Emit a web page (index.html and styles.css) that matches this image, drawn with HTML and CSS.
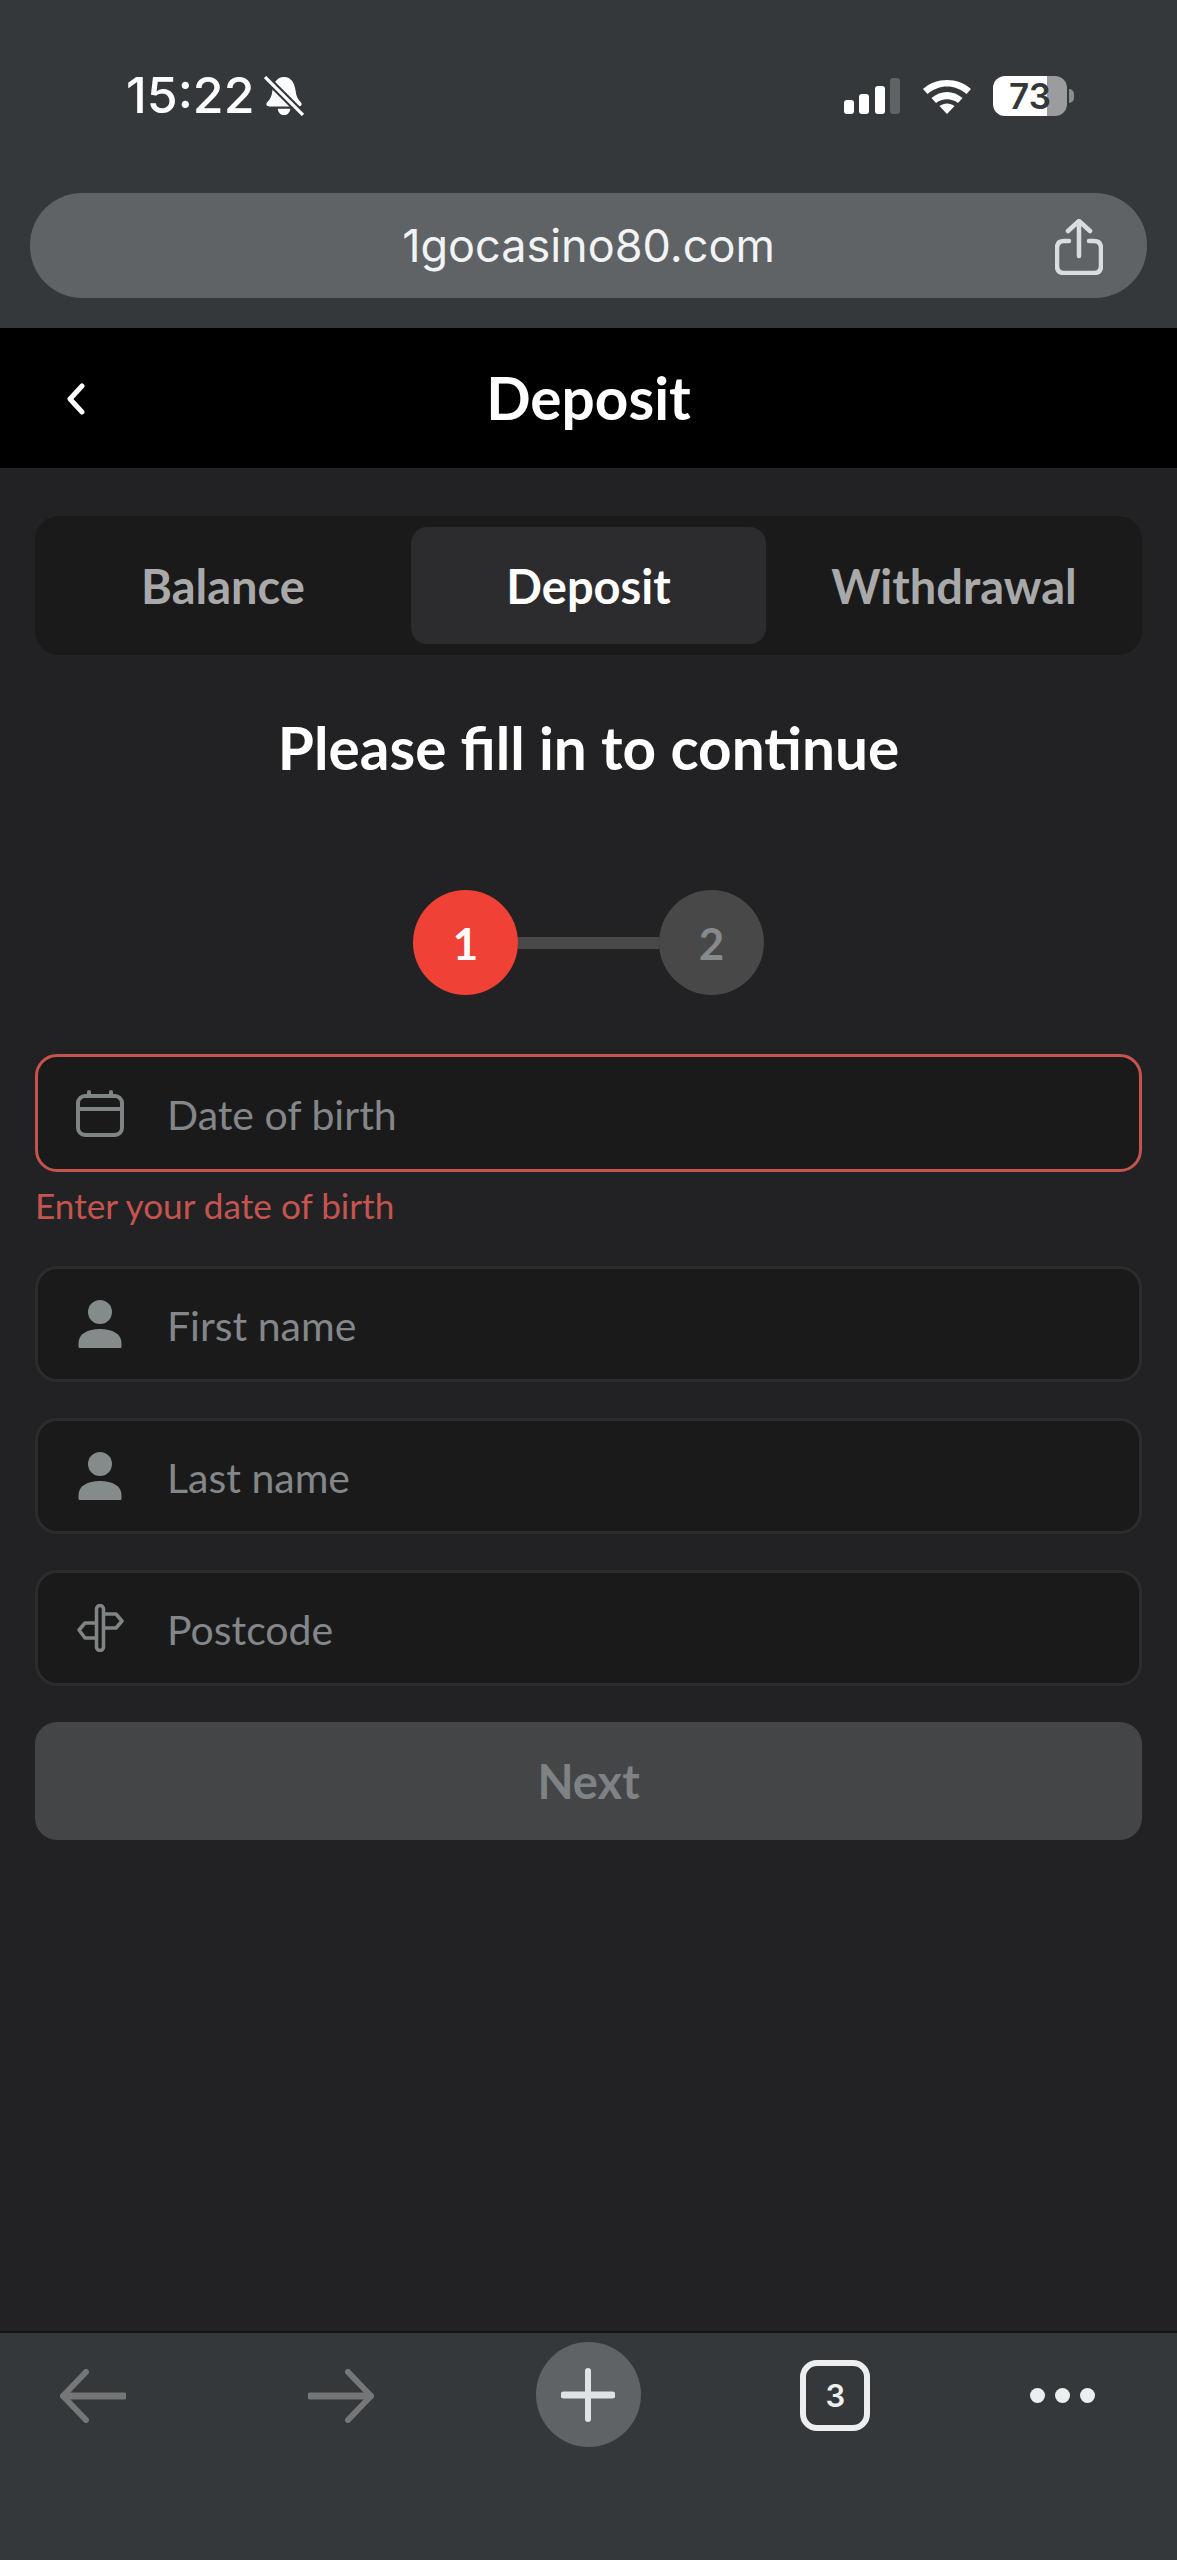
FILE: index.html
```html
<!DOCTYPE html>
<html lang="en">
<head>
    <meta charset="UTF-8">
    <meta name="viewport" content="width=device-width, initial-scale=1.0">
    <title>Deposit</title>
    <link rel="stylesheet" href="styles.css">
</head>
<body>
    <!-- Browser chrome -->
    <div class="browser-top">
        <div class="status-bar">
            <div class="status-left">
                <span class="time">15:22</span>
                <svg class="bell" viewBox="0 0 38 38">
                    <path d="M19 1c7 0 10 6 11 13 .5 5 2 8 5 11 1.500 2 .5 4-2 4H5c-2.500 0-3.500-2-2-4 3-3 4.500-6 5-11C9 7 12 1 19 1z" fill="#fff"/>
                    <path d="M13 31h12c-.5 4-3 6-6 6s-5.500-2-6-6z" fill="#fff"/>
                    <path d="M3 3l33 33" stroke="#35383a" stroke-width="7"/>
                    <path d="M1 1l36 36" stroke="#fff" stroke-width="3"/>
                </svg>
            </div>
            <div class="status-right">
                <div class="signal">
                    <span class="bar bar-1"></span>
                    <span class="bar bar-2"></span>
                    <span class="bar bar-3"></span>
                    <span class="bar bar-4"></span>
                </div>
                <svg class="wifi" viewBox="0 0 50 36">
                    <path d="M1 11C14-1 36-1 49 11l-4.500 5C33 6 17 6 5.500 16z" fill="#fff"/>
                    <path d="M9.500 20c9-8 22-8 31 0l-4.500 5c-6.500-5-15.500-5-22 0z" fill="#fff"/>
                    <path d="M17.500 28c4.500-3.500 10.500-3.500 15 0L25 36z" fill="#fff"/>
                </svg>
                <div class="battery">
                    <div class="battery-body"><span class="battery-text">73</span></div>
                    <span class="battery-nub"></span>
                </div>
            </div>
        </div>
        <div class="url-bar">
            <span class="url-text">1gocasino80.com</span>
            <svg class="share" viewBox="0 0 48 56" fill="none" stroke="#d9dde0" stroke-width="4.500" stroke-linecap="round" stroke-linejoin="round">
                <path d="M14 22H9c-4 0-7 2-7 7v18c0 5 3 7 7 7h30c4 0 7-2 7-7V29c0-5-3-7-7-7h-5"/>
                <path d="M24 37V3M13 12L24 2l11 10"/>
            </svg>
        </div>
    </div>

    <header class="page-header">
        <svg class="back" viewBox="0 0 20 32" fill="none" stroke="#fff" stroke-width="5" stroke-linecap="round" stroke-linejoin="round">
            <path d="M16 3L4 16l12 13"/>
        </svg>
        <h1>Deposit</h1>
    </header>

    <main>
        <div class="tabs">
            <div class="tab">Balance</div>
            <div class="tab active">Deposit</div>
            <div class="tab">Withdrawal</div>
        </div>

        <h2>Please fill in to continue</h2>

        <div class="stepper">
            <div class="step current">1</div>
            <div class="step-line"></div>
            <div class="step">2</div>
        </div>

        <form class="fields">
            <div class="field-group">
                <div class="field invalid">
                    <svg class="field-icon" viewBox="0 0 48 48" fill="none" stroke="#7f8485" stroke-width="4" stroke-linecap="round" stroke-linejoin="round">
                        <rect x="2" y="7" width="44" height="39" rx="7"/>
                        <path d="M2 20h44M13 3v4M35 3v4"/>
                    </svg>
                    <span class="placeholder">Date of birth</span>
                </div>
                <div class="error">Enter your date of birth</div>
            </div>
            <div class="field">
                <svg class="field-icon" viewBox="0 0 48 48" fill="#858a8b">
                    <circle cx="24" cy="12" r="12"/>
                    <path d="M4 48c-1 0-1.500-.5-1.500-1.500V43c0-9 9-14 21.500-14s21.500 5 21.500 14v3.500c0 1-.5 1.500-1.500 1.500z"/>
                </svg>
                <span class="placeholder">First name</span>
            </div>
            <div class="field">
                <svg class="field-icon" viewBox="0 0 48 48" fill="#858a8b">
                    <circle cx="24" cy="12" r="12"/>
                    <path d="M4 48c-1 0-1.500-.5-1.500-1.500V43c0-9 9-14 21.500-14s21.500 5 21.500 14v3.500c0 1-.5 1.500-1.500 1.500z"/>
                </svg>
                <span class="placeholder">Last name</span>
            </div>
            <div class="field">
                <svg class="field-icon" viewBox="0 0 48 48" fill="none" stroke="#7f8485" stroke-width="3.500" stroke-linejoin="round">
                    <rect x="20.500" y="1.500" width="7" height="45" rx="3.500"/>
                    <path d="M27.500 10H40l6 7-6 7H27.500"/>
                    <path d="M20.500 19H9l-6 7 6 8h11.500"/>
                </svg>
                <span class="placeholder">Postcode</span>
            </div>
            <button class="next" type="button">Next</button>
        </form>
    </main>

    <!-- Browser toolbar -->
    <nav class="toolbar">
        <svg class="arrow arrow-back" viewBox="0 0 66 54" fill="none" stroke="#757677" stroke-linecap="round" stroke-linejoin="round">
            <path d="M64 27H4" stroke-width="7"/>
            <path d="M26 3L3 27l23 24" stroke-width="6"/>
        </svg>
        <svg class="arrow" viewBox="0 0 66 54" fill="none" stroke="#757677" stroke-linecap="round" stroke-linejoin="round">
            <path d="M2 27h60" stroke-width="7"/>
            <path d="M40 3l23 24-23 24" stroke-width="6"/>
        </svg>
        <div class="plus">
            <svg class="plus-icon" viewBox="0 0 54 54" fill="none" stroke="#dfe2e6" stroke-linecap="round">
                <path d="M27 3v48" stroke-width="6"/>
                <path d="M3 27h48" stroke-width="7"/>
            </svg>
        </div>
        <div class="tab-count">3</div>
        <div class="dots">
            <span class="dot"></span>
            <span class="dot"></span>
            <span class="dot"></span>
        </div>
    </nav>
</body>
</html>
```

FILE: styles.css
```css
/* Reset and basic styles */
* {
    margin: 0;
    padding: 0;
    box-sizing: border-box;
}

body {
    width: 1177px;
    height: 2560px;
    display: flex;
    flex-direction: column;
    font-family: Lato, "Noto Sans", sans-serif;
    background-color: #222224;
    color: #fff;
    overflow: hidden;
}

/* Browser top */
.browser-top {
    height: 328px;
    background-color: #35383a;
    padding: 75px 30px 0;
}

.status-bar {
    height: 41px;
    display: flex;
    justify-content: space-between;
    align-items: center;
    padding: 0 73px 0 96px;
}

.status-left {
    display: flex;
    align-items: center;
    gap: 10px;
}

.time {
    font-family: Inter, sans-serif;
    font-size: 50px;
    font-weight: 500;
    line-height: 41px;
}

.bell {
    width: 40px;
    height: 40px;
}

.status-right {
    display: flex;
    align-items: center;
}

.signal {
    display: flex;
    align-items: flex-end;
    gap: 5.500px;
    height: 36px;
    margin-right: 22px;
}

.bar {
    width: 10px;
    background-color: #fff;
    border-radius: 3px;
}

.bar-1 { height: 14px; }
.bar-2 { height: 20px; }
.bar-3 { height: 28px; }
.bar-4 { height: 36px; background-color: #5f6366; }

.wifi {
    width: 50px;
    height: 36px;
    margin-right: 21px;
}

.battery {
    display: flex;
    align-items: center;
    gap: 2px;
}

.battery-body {
    width: 74px;
    height: 40px;
    border-radius: 12px;
    background: linear-gradient(to right, #fff 73%, #9c9c9e 73%);
    text-align: center;
}

.battery-text {
    font-family: Inter, sans-serif;
    font-size: 35px;
    font-weight: 600;
    line-height: 40px;
    color: #35383a;
}

.battery-nub {
    width: 5px;
    height: 14px;
    background-color: #8c8d8f;
    border-radius: 0 5px 5px 0;
}

.url-bar {
    margin-top: 77px;
    height: 105px;
    background-color: #5f6366;
    border-radius: 52px;
    display: flex;
    align-items: center;
    justify-content: center;
    position: relative;
}

.url-text {
    font-family: Inter, sans-serif;
    font-size: 45px;
    color: #f2f3f4;
}

.share {
    position: absolute;
    right: 44px;
    top: 26px;
    width: 48px;
    height: 56px;
}

/* Page header */
.page-header {
    height: 140px;
    background-color: #000;
    display: flex;
    align-items: center;
    justify-content: center;
    position: relative;
}

.page-header h1 {
    font-size: 58.500px;
    line-height: 64px;
    padding-bottom: 3px;
    font-weight: 700;
}

.back {
    position: absolute;
    left: 66px;
    top: 55px;
    width: 20px;
    height: 32px;
}

/* Main content */
main {
    flex: 1;
    padding: 48px 35px 0;
}

.tabs {
    display: grid;
    grid-template-columns: 376px 355px 376px;
    height: 139px;
    padding: 11px 0;
    background-color: #1a1a1b;
    border-radius: 24px;
}

.tab {
    display: flex;
    align-items: center;
    justify-content: center;
    font-size: 47px;
    font-weight: 700;
    color: #a9a9aa;
    border-radius: 16px;
}

.tab.active {
    background-color: #2c2c2e;
    color: #fff;
}

main h2 {
    margin-top: 58px;
    font-size: 58.500px;
    line-height: 68px;
    font-weight: 700;
    text-align: center;
}

.stepper {
    margin-top: 109px;
    display: flex;
    align-items: center;
    justify-content: center;
}

.step {
    width: 105px;
    height: 105px;
    border-radius: 50%;
    background-color: #484849;
    color: #858a8b;
    display: flex;
    align-items: center;
    justify-content: center;
    font-size: 44px;
    font-weight: 700;
}

.step.current {
    background-color: #ef4136;
    color: #fff;
}

.step-line {
    width: 141px;
    height: 12px;
    background-color: #484849;
}

.fields {
    margin-top: 59px;
    display: flex;
    flex-direction: column;
    gap: 36px;
}

.field {
    height: 116px;
    display: flex;
    align-items: center;
    gap: 43px;
    padding-left: 38px;
    background-color: #1a1a1b;
    border: 3px solid #2b2c2e;
    border-radius: 22px;
}

.field.invalid {
    height: 118px;
    border-color: #c5544f;
}

.field-icon {
    width: 48px;
    height: 48px;
    flex-shrink: 0;
}

.placeholder {
    font-size: 41px;
    padding-top: 2px;
    color: #83878a;
}

.error {
    margin-top: 9px;
    font-size: 35.200px;
    line-height: 49px;
    color: #c5544f;
}

.next {
    height: 118px;
    border: none;
    border-radius: 22px;
    background-color: #444547;
    color: #7e8284;
    font-family: Lato, sans-serif;
    font-size: 47px;
    font-weight: 700;
}

/* Browser toolbar */
.toolbar {
    height: 229px;
    background-color: #35383a;
    border-top: 2px solid #141416;
    padding: 9px 82px 0 60px;
    display: flex;
    align-items: flex-start;
    justify-content: space-between;
}

.arrow {
    width: 66px;
    height: 54px;
    margin-top: 27px;
}

.arrow-back {
    margin-right: 22px;
}

.plus {
    width: 105px;
    height: 105px;
    margin-left: 2px;
    border-radius: 50%;
    background-color: #5f6366;
    display: flex;
    align-items: center;
    justify-content: center;
}

.plus-icon {
    width: 54px;
    height: 54px;
}

.tab-count {
    width: 70px;
    height: 71px;
    margin-top: 18px;
    border: 6px solid #eceef0;
    border-radius: 17px;
    display: flex;
    align-items: center;
    justify-content: center;
    font-family: Inter, sans-serif;
    font-size: 31px;
    font-weight: 600;
    color: #eceef0;
}

.dots {
    display: flex;
    gap: 10px;
    margin-top: 46px;
}

.dot {
    width: 15px;
    height: 15px;
    border-radius: 50%;
    background-color: #eceef0;
}
```
